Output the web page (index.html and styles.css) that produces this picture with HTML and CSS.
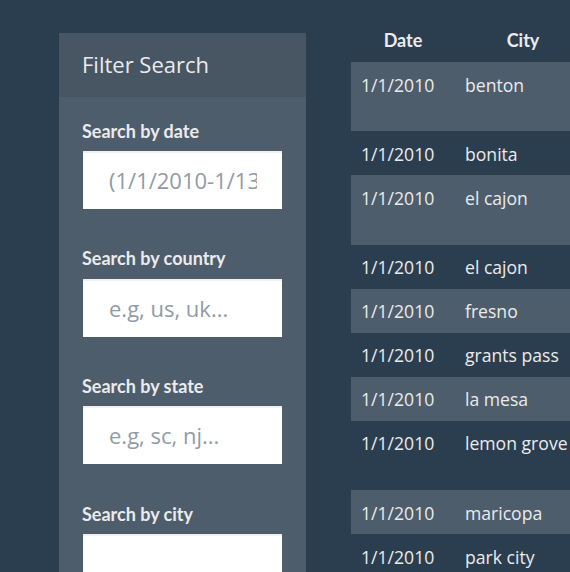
FILE: index.html
```html
<!DOCTYPE html>
<html lang="en">
<head>
<meta charset="utf-8">
<title>UFO Sightings</title>
<link rel="stylesheet" href="styles.css">
</head>
<body>
<div class="page">
  <aside class="panel">
    <div class="panel-heading">Filter Search</div>
    <form class="panel-body">
      <div class="group">
        <label class="label" for="date">Search by date</label>
        <input class="field" id="date" type="text" placeholder="(1/1/2010-1/13/2010)">
      </div>
      <div class="group">
        <label class="label" for="country">Search by country</label>
        <input class="field" id="country" type="text" placeholder="e.g, us, uk...">
      </div>
      <div class="group">
        <label class="label" for="state">Search by state</label>
        <input class="field" id="state" type="text" placeholder="e.g, sc, nj...">
      </div>
      <div class="group">
        <label class="label" for="city">Search by city</label>
        <input class="field" id="city" type="text">
      </div>
    </form>
  </aside>
  <table class="sightings">
    <colgroup>
      <col class="c-date"><col class="c-city"><col class="c-state"><col class="c-country"><col class="c-shape"><col class="c-dur"><col class="c-comm">
    </colgroup>
    <thead>
      <tr><th>Date</th><th>City</th><th>State</th><th>Country</th><th>Shape</th><th>Duration</th><th>Comments</th></tr>
    </thead>
    <tbody>
      <tr><td>1/1/2010</td><td>benton</td><td>ar</td><td>us</td><td>circle</td><td>5 mins.</td><td>4 bright green circles high in the sky going in circles then one bright green light at my front door.</td></tr>
      <tr><td>1/1/2010</td><td>bonita</td><td>ca</td><td>us</td><td>light</td><td>13 minutes</td><td>Three bright red lights witnessed floating</td></tr>
      <tr><td>1/1/2010</td><td>el cajon</td><td>ca</td><td>us</td><td>triangle</td><td>2 mins.</td><td>Strange Lights over the sky near El Cajon, California, moving in a slow steady line westward.</td></tr>
      <tr><td>1/1/2010</td><td>el cajon</td><td>ca</td><td>us</td><td>circle</td><td>15 mins.</td><td>Three red lights moving slowly</td></tr>
      <tr><td>1/1/2010</td><td>fresno</td><td>ca</td><td>us</td><td>fireball</td><td>1 minute</td><td>Orange fireball flying overhead</td></tr>
      <tr><td>1/1/2010</td><td>grants pass</td><td>or</td><td>us</td><td>light</td><td>5 mins.</td><td>Bright orange light over the hill</td></tr>
      <tr><td>1/1/2010</td><td>la mesa</td><td>ca</td><td>us</td><td>fireball</td><td>10 mins.</td><td>Five orange fireballs in a row</td></tr>
      <tr><td>1/1/2010</td><td>lemon grove</td><td>ca</td><td>us</td><td>light</td><td>20 mins.</td><td>Many orange lights rising up into the night sky, fading away one at a time over the city.</td></tr>
      <tr><td>1/1/2010</td><td>maricopa</td><td>az</td><td>us</td><td>other</td><td>2 mins.</td><td>Flashing white and red object</td></tr>
      <tr><td>1/1/2010</td><td>park city</td><td>ut</td><td>us</td><td>light</td><td>3 mins.</td><td>Red lights hovering in the sky</td></tr>
    </tbody>
  </table>
</div>
</body>
</html>
```

FILE: styles.css
```css
html, body {
  margin: 0;
  overflow: hidden;
}

body {
  background: #2b3e50;
  color: #ebebeb;
  font-family: "Open Sans", "Noto Sans", sans-serif;
}

.page {
  display: flex;
  align-items: flex-start;
  gap: 45px;
  padding: 18px 0 0 59px;
  width: 1500px;
}

.panel {
  flex: 0 0 247px;
  width: 247px;
  margin-top: 15px;
  background: #4e5d6c;
}

.panel-heading {
  box-sizing: border-box;
  height: 64px;
  display: flex;
  align-items: center;
  padding: 0 23px 3px;
  background: #485563;
  font-size: 22px;
  color: #ebebeb;
}

.panel-body {
  margin: 0;
  padding: 23.7px 24px 40px 23px;
  display: flex;
  flex-direction: column;
  gap: 39.35px;
}

.group {
  display: flex;
  flex-direction: column;
}

.label {
  font-family: "Lato", "Open Sans", sans-serif;
  font-size: 18px;
  line-height: 20px;
  font-weight: 700;
  margin-bottom: 10.3px;
}

.field {
  box-sizing: border-box;
  width: 199px;
  height: 58px;
  margin: 0 0 0 1px;
  padding: 0 25px 0 26px;
  border: 0;
  border-radius: 0;
  background: #ffffff;
  box-shadow: inset 0 2px 1px rgba(0, 0, 0, 0.06), inset 1px 0 1px rgba(0, 0, 0, 0.03);
  font-family: inherit;
  font-size: 22px;
  color: #555;
  outline: none;
}

.field::placeholder {
  color: #909ba6;
}

.sightings {
  border-collapse: collapse;
  table-layout: fixed;
  width: 1100px;
  font-size: 17.6px;
  line-height: 25.4px;
}

.c-date { width: 104px; }
.c-city { width: 136px; }
.c-state { width: 80px; }
.c-country { width: 90px; }
.c-shape { width: 100px; }
.c-dur { width: 120px; }
.c-comm { width: 470px; }

.sightings th,
.sightings td {
  padding: 10.5px 10px 8.1px;
  vertical-align: top;
  text-align: left;
}

.sightings th {
  font-family: "Lato", "Open Sans", sans-serif;
  font-size: 18px;
  font-weight: 700;
  text-align: center;
  padding-top: 10px;
  padding-bottom: 8.6px;
}

.sightings tbody tr:nth-child(odd) {
  background: #4e5d6c;
}
```
